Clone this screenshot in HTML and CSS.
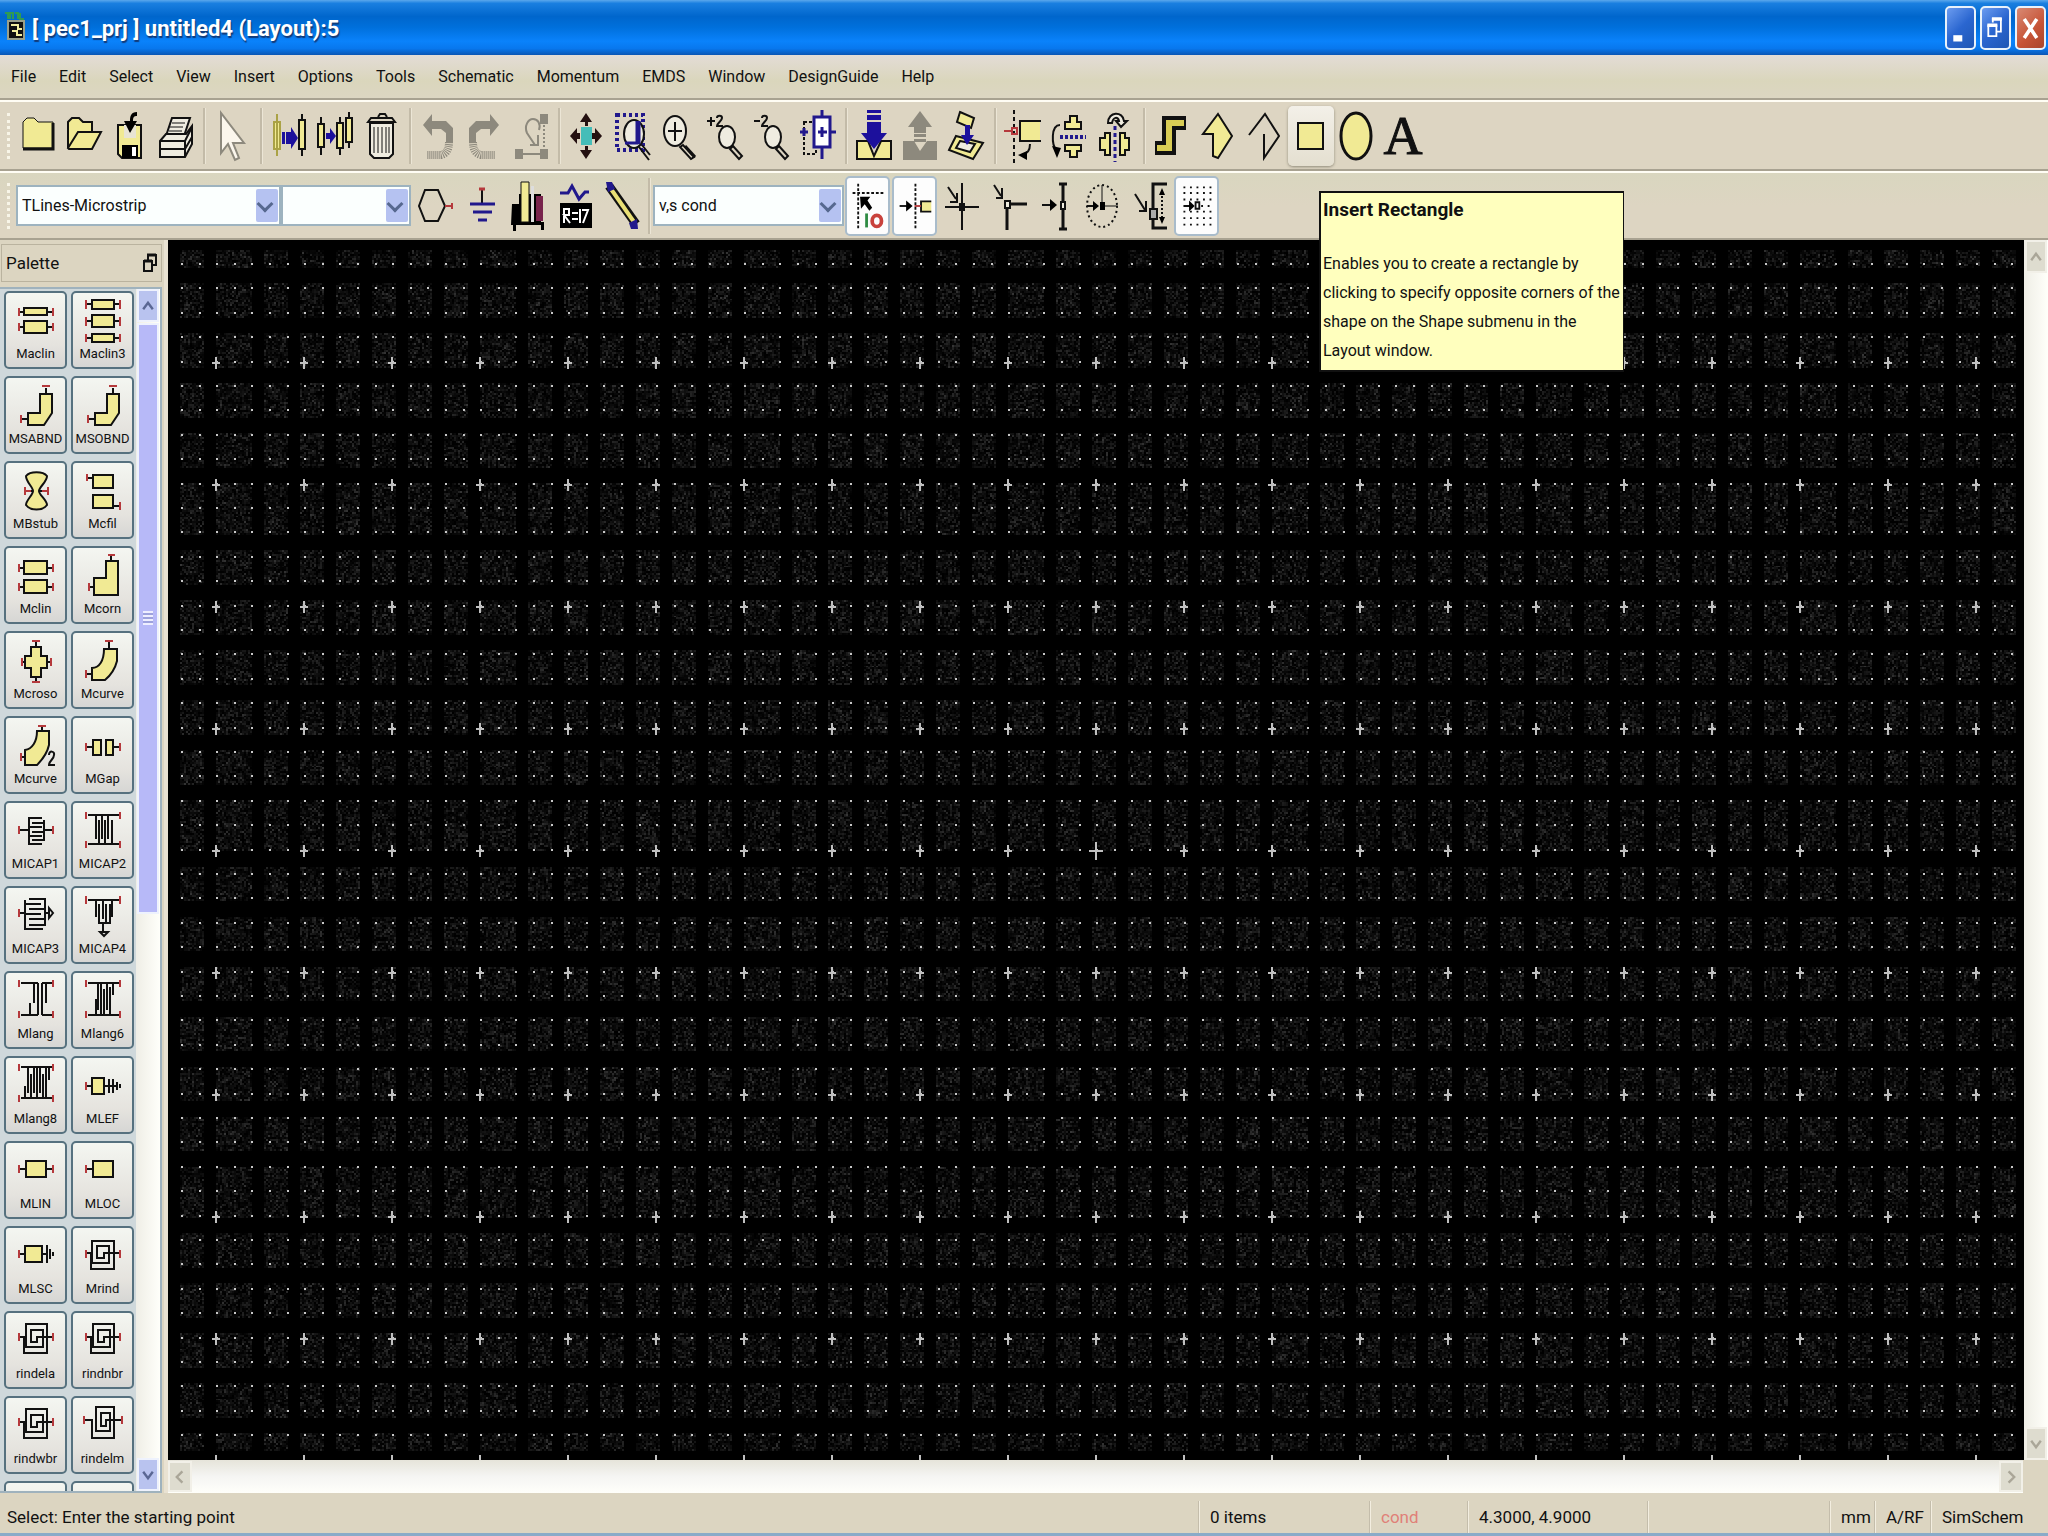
FILE: index.html
```html
<!DOCTYPE html>
<html lang="en">
<head>
  <meta charset="UTF-8">
  <title>[ pec1_prj ] untitled4 (Layout):5</title>
  <meta name="viewport" content="width=device-width, initial-scale=1.0">
  <link rel="stylesheet" href="styles.css">
</head>
<body>
  <header class="titlebar">
    <svg class="app-icon" viewBox="0 0 24 32"><path d="M1 1h3v6M6 7V1h3v6M11 1h3v6M16 1v6h4" fill="none" stroke="#2f9a54" stroke-width="2"/><rect x="4" y="9" width="16" height="18" fill="#111" stroke="#9aa08a" stroke-width="2"/><path d="M7 13h7v4h4M8 19h5v4h5" fill="none" stroke="#f4efa0" stroke-width="2"/></svg>
    <h1>[ pec1_prj ] untitled4 (Layout):5</h1>
    <div class="window-buttons">
      <button class="win-btn" aria-label="Minimize"><svg viewBox="0 0 30 42"><path d="M7 29h10v7H7z" fill="#fff"/></svg></button>
      <button class="win-btn" aria-label="Restore"><svg viewBox="0 0 30 42"><path d="M12 15v-4h9v14h-4M7 18h9v12H7z" fill="none" stroke="#fff" stroke-width="2"/><path d="M11 11h11M6 18h11" stroke="#fff" stroke-width="4"/></svg></button>
      <button class="win-btn close" aria-label="Close"><svg viewBox="0 0 30 42"><path d="M8 11l14 21M22 11L8 32" stroke="#fff" stroke-width="4"/></svg></button>
    </div>
  </header>

  <nav class="menubar">
    <button>File</button>
    <button>Edit</button>
    <button>Select</button>
    <button>View</button>
    <button>Insert</button>
    <button>Options</button>
    <button>Tools</button>
    <button>Schematic</button>
    <button>Momentum</button>
    <button>EMDS</button>
    <button>Window</button>
    <button>DesignGuide</button>
    <button>Help</button>
  </nav>

  <!-- main toolbar -->
  <div class="toolbar">
    <span class="grip"></span>
    <button class="tool" aria-label="New"><svg viewBox="0 0 44 56"><path class="y thin" d="M7 40V14l4-4h7l4 4h15v26z"/><path class="k bold" d="M7 41h30V15"/></svg></button>
    <button class="tool" aria-label="Open"><svg viewBox="0 0 44 56"><path class="y" d="M6 40V14l4-4h7l4 4h9v10M6 40l10-16h23l-9 17H7z"/></svg></button>
    <button class="tool" aria-label="Save"><svg viewBox="0 0 44 56"><path class="y" d="M10 17h23v33H14l-4-4z"/><path d="M16 17h12v13H16z" fill="#e8e4d4"/><path d="M14 37h16v13H14z"/><path d="M24 39h4v9h-4z" fill="#fff"/><path d="M29 4c-6 0-7 4-7 9h-6l6 12 7-12h-4c0-4 1-5 4-5z"/></svg></button>
    <button class="tool" aria-label="Print"><svg viewBox="0 0 44 56"><path class="w" d="M18 10h18l-6 18H12z"/><path class="k thin" d="M18 15h13M16 19h13M15 23h13"/><path class="w" d="M6 33l6-7h20l6-8v18l-7 13H6z"/><path class="k" d="M6 33h25l7-14M31 33v16M6 41h25l7-12"/></svg></button>
    <span class="sep"></span>
    <button class="tool" aria-label="End Command"><svg viewBox="0 0 44 56"><path d="M10 5v40l7-9 7 16 4-2-6-15h11z" fill="#fbf6ec" stroke="#8d897d" stroke-width="2"/></svg></button>
    <span class="sep"></span>
    <button class="tool" aria-label="Copy"><svg viewBox="0 0 44 56"><path d="M9 6v42M6 14h6v27H6z" fill="#f0ea90" stroke="#aaa245" stroke-width="2"/><path class="y" d="M34 6v6M34 41v7M31 12h6v29h-6z"/><path class="b" d="M14 24h3v12h-3zM18 24h5v-5l7 11-7 11v-5h-5z"/></svg></button>
    <button class="tool" aria-label="Step and Repeat"><svg viewBox="0 0 44 56"><path class="y" d="M7 9v7M7 39v8M4 16h6v23H4zM26 9v6M26 40v7M23 15h6v25h-6zM35 4v6M35 34v6M32 10h6v24h-6z"/><path class="b" d="M12 25h4v-5l6 8-6 8v-5h-4z"/></svg></button>
    <button class="tool" aria-label="Delete"><svg viewBox="0 0 44 56"><path class="w" d="M10 15h23v31l-4 4H14l-4-4z"/><path class="k" d="M8 14l3-4h21l3 4zM18 9l2-3h5l2 3"/><path class="k thin" d="M14 19v26M18 19v26M22 19v26M26 19v26M29 19v26"/></svg></button>
    <span class="sep"></span>
    <button class="tool" aria-label="Undo" disabled><svg viewBox="0 0 44 56"><path class="g" d="M6 17L15 6v7h14l7 7v14h-7v-9l-5-4h-9v7z"/><path d="M32 34c0 8-3 12-8 13H10" fill="none" stroke="#8d897d" stroke-width="8" stroke-dasharray="1 1"/></svg></button>
    <button class="tool" aria-label="Redo" disabled><svg viewBox="0 0 44 56"><path class="g" d="M36 17L27 6v7H13l-7 7v14h7v-9l5-4h9v7z"/><path d="M10 34c0 8 3 12 8 13h14" fill="none" stroke="#8d897d" stroke-width="8" stroke-dasharray="1 1"/></svg></button>
    <button class="tool" aria-label="Swap Components" disabled><svg viewBox="0 0 44 56"><path class="g" d="M31 6h8v10h-8zM6 41h8v10H6zM31 41h8v10h-8z"/><path d="M14 46h17M26 37l-8-12c-3-7 1-14 6-14s8 5 6 11M21 37h8V27" fill="none" stroke="#8d897d" stroke-width="2"/><path d="M35 17v24" stroke="#8d897d" stroke-width="2" stroke-dasharray="2 2"/></svg></button>
    <span class="sep"></span>
    <button class="tool" aria-label="Pan"><svg viewBox="0 0 44 56"><path d="M15 19h11v18H15z" fill="#45bdb8"/><path class="d" d="M20 5l6 9h-4v4h-3v-4h-5zM20 51l6-9h-4v-4h-3v4h-5zM4 28l7-8v5h3v6h-3v5zM36 28l-7-8v5h-3v6h3v5z"/></svg></button>
    <button class="tool" aria-label="Zoom Area"><svg viewBox="0 0 44 56"><path class="n" d="M5 7h26v35H5z" stroke-width="4" stroke-dasharray="3 3"/><ellipse class="w" cx="22" cy="26" rx="10" ry="14"/><path class="n" d="M13 35h12V13M27 13v23" stroke-width="3"/><path class="k" d="M27 39l10 13M30 37l8 10"/></svg></button>
    <button class="tool" aria-label="Zoom In"><svg viewBox="0 0 44 56"><ellipse class="w" cx="17" cy="23" rx="11" ry="15"/><path class="k" d="M17 14v19M10 23h14M22 39l3-2 11 12-3 2z"/><path class="k bold" d="M27 38l10 11"/></svg></button>
    <button class="tool" aria-label="Zoom In by 2"><svg viewBox="0 0 44 56"><path class="k" d="M3 13h8M7 9v9M13 10c0-3 5-3 5 0 0 3-5 5-5 8h6"/><ellipse class="w" cx="23" cy="29" rx="8" ry="11"/><path class="k" d="M26 41l3-3 9 10-3 3z"/></svg></button>
    <button class="tool" aria-label="Zoom Out by 2"><svg viewBox="0 0 44 56"><path class="k" d="M4 13h6M12 10c0-3 5-3 5 0 0 3-5 5-5 8h6"/><ellipse class="w" cx="23" cy="29" rx="8" ry="11"/><path class="k" d="M26 41l3-3 9 10-3 3z"/></svg></button>
    <button class="tool" aria-label="View All"><svg viewBox="0 0 44 56"><path class="k" d="M8 14h12v32H8z" stroke-dasharray="3 2"/><path d="M18 9h16v30H18z" fill="#fff" stroke="#21188c" stroke-width="3"/><path class="n" d="M26 2v6M26 40v11M34 24h6M4 24h8M8 20v8M22 24h9M26 19v10" stroke-width="3"/></svg></button>
    <span class="sep"></span>
    <button class="tool" aria-label="Push Into Hierarchy"><svg viewBox="0 0 44 56"><path class="y" d="M4 33h11l6 15 7-15h10v18H4z"/><path class="b" d="M14 2h14v3H14zM14 7h14v5H14zM14 14h14v11h6L21 41 8 25h6z"/></svg></button>
    <button class="tool" aria-label="Pop Out of Hierarchy" disabled><svg viewBox="0 0 44 56"><path class="g" d="M4 33h11l6 10 7-10h10v19H4zM21 3l12 16h-6v6H15v-6H9zM15 26h12v3H15zM15 31h12v3H15z"/></svg></button>
    <button class="tool" aria-label="Hierarchy Instance"><svg viewBox="0 0 44 56"><path class="y" d="M15 4l14 6-3 10-14-6zM11 28l27 7-10 16-24-9z"/><path class="w" d="M15 33l15 3-5 8-14-4z"/><path class="b" d="M20 17h5v10h4l-7 10-6-10h4z"/></svg></button>
    <span class="sep"></span>
    <button class="tool" aria-label="Rotate"><svg viewBox="0 0 44 56"><path class="k" d="M12 2v54" stroke-dasharray="4 3"/><path d="M38 13H18v20h20z" fill="#f1ea94"/><path class="k" d="M39 13H18v20h21M28 36c0 7-3 10-8 11"/><path class="r" d="M2 23h9M10 20h5v6h-5z"/><path d="M25 43v9l-9-5z"/></svg></button>
    <button class="tool" aria-label="Mirror About X"><svg viewBox="0 0 44 56"><path class="y" d="M17 21v-7h5V8h7v6h4v7zM17 37v6h5v6h7v-6h4v-6z"/><path class="n" d="M12 29h26" stroke-width="4" stroke-dasharray="3 2"/><path class="k" d="M12 17c-9 0-9 20-3 26"/><path d="M4 38l9 2-4 10z"/></svg></button>
    <button class="tool" aria-label="Mirror About Y"><svg viewBox="0 0 44 56"><path class="y" d="M16 25h-5v5H6v12h5v5h5zM26 25h5v5h4v12h-4v5h-5z"/><path class="n" d="M21 18v36" stroke-width="3" stroke-dasharray="4 3"/><path class="w" d="M14 15c0-12 15-12 16-2h3l-6 6-5-6h3c-1-5-6-4-7 2z"/></svg></button>
    <span class="sep"></span>
    <button class="tool" aria-label="Insert Path"><svg viewBox="0 0 44 56"><path d="M4 40h14V15h17" fill="none" stroke="#111" stroke-width="14"/><path d="M6 40h12V15h15" fill="none" stroke="#d9cd55" stroke-width="6"/></svg></button>
    <button class="tool" aria-label="Insert Polygon"><svg viewBox="0 0 44 56"><path class="y" d="M21 6l14 22-14 22-5-2V26H6z"/></svg></button>
    <button class="tool" aria-label="Insert Polyline"><svg viewBox="0 0 44 56"><path class="k" d="M6 27L22 6l14 22-15 22V26"/></svg></button>
    <button class="tool hover" aria-label="Insert Rectangle"><svg viewBox="0 0 44 56"><path class="y" d="M9 15h25v26H9z"/></svg></button>
    <button class="tool" aria-label="Insert Circle"><svg viewBox="0 0 44 56"><ellipse class="y bold" cx="21" cy="28" rx="15" ry="23"/></svg></button>
    <button class="tool text-tool" aria-label="Insert Text">A</button>
  </div>

  <!-- palette selection, layer and snap toolbar -->
  <div class="toolbar second">
    <span class="grip"></span>
    <label class="combo combo-palette"><select aria-label="Component palette"><option>TLines-Microstrip</option></select></label>
    <label class="combo combo-history"><select aria-label="Component history"><option></option></select></label>
    <button class="tool" aria-label="Port"><svg viewBox="0 0 44 60"><path class="k" d="M12 14h13l7 16-7 15H12L6 30z"/><path class="r" d="M32 30h7M39 27v6"/></svg></button>
    <button class="tool" aria-label="Ground"><svg viewBox="0 0 44 60"><path class="k" d="M22 14v14"/><path class="r bold" d="M19 13h6"/><path class="n" d="M10 28h25M13 36h19M18 44h9" stroke-width="3"/></svg></button>
    <button class="tool" aria-label="Library"><svg viewBox="0 0 44 60"><path d="M5 28h7V18h22v28h3v8h-3v-5H9v6H6v-6H4z"/><path class="y thin" d="M14 6h8v40h-8z"/><path d="M24 10h3v36h-3z" fill="#ddd"/><path d="M29 20h7v25h-7z" fill="#78234c"/></svg></button>
    <button class="tool" aria-label="Variables"><svg viewBox="0 0 44 60"><path class="n" d="M6 17h8l4-7 7 13 6-7h4" stroke-width="3"/><path d="M6 27h32v25H6z"/><path d="M10 47V33h5v6h-5l6 8M18 37h6M18 43h6M26 33v14M28 34h6l-5 13" fill="none" stroke="#fff" stroke-width="2"/></svg></button>
    <button class="tool" aria-label="Wire"><svg viewBox="0 0 44 60"><path d="M8 10l27 38" stroke="#111" stroke-width="9"/><path d="M10 13l23 33" stroke="#e9df75" stroke-width="4"/><path d="M5 6h6l3 7-7 3zM37 53h-7l-2-6 8-4z" fill="#21188c"/></svg></button>
    <span class="sep"></span>
    <label class="combo combo-layer"><select aria-label="Entry layer"><option>v,s cond</option></select></label>
    <button class="tool on" aria-label="Snap enabled"><svg viewBox="0 0 44 60"><path class="k" d="M12 6v50M6 16h34" stroke-dasharray="3 2"/><path d="M14 20h11l-3 4 5 8-3 3-5-7-4 5z"/><path d="M21 38v15" stroke="#2e8b43" stroke-width="3"/><ellipse cx="32" cy="46" rx="5" ry="6" fill="none" stroke="#c9423c" stroke-width="4"/></svg></button>
    <button class="tool on" aria-label="Pin snap"><svg viewBox="0 0 44 60"><path class="k" d="M23 6v50" stroke-dasharray="3 2"/><path class="k" d="M6 30h9"/><path class="y" d="M40 25H29v11h11"/><path d="M13 24l7 6-7 6z"/><path class="r" d="M22 30h7"/></svg></button>
    <button class="tool" aria-label="Intersect snap"><svg viewBox="0 0 44 60"><path class="k" d="M22 7v47M5 31h34M8 11l8 12M17 17v9h-7M20 28h4v6h-4z"/></svg></button>
    <button class="tool" aria-label="Vertex snap"><svg viewBox="0 0 44 60"><path class="k bold" d="M20 54V31M22 28h18"/><path class="k" d="M7 9l7 11M15 12v10H9"/><path class="w" d="M18 25h5v7h-5z"/></svg></button>
    <button class="tool" aria-label="Midpoint snap"><svg viewBox="0 0 44 60"><path class="k bold" d="M29 8v45M25 8h8M25 53h8"/><path class="k" d="M8 29h10"/><path d="M16 23l7 6-7 6z"/><path class="w" d="M27 26h4v7h-4z"/></svg></button>
    <button class="tool" aria-label="Arc center snap"><svg viewBox="0 0 44 60"><ellipse class="k" cx="21" cy="30" rx="15" ry="21" stroke-dasharray="2 3"/><path class="k thin" d="M21 9v21h16"/><path class="k" d="M6 30h8"/><path d="M12 25l6 5-6 5zM19 26h5v8h-5z"/></svg></button>
    <button class="tool" aria-label="Edge snap"><svg viewBox="0 0 44 60"><path class="k" d="M7 18l10 16M18 25v10h-7"/><path class="k" d="M34 16v32" stroke-dasharray="2 2"/><path class="k bold" d="M39 8H25v44h14"/><path d="M22 33h7v10h-7z" fill="#aaa" stroke="#111" stroke-width="2"/><path d="M31 19l3-7 3 7zM31 41l3 7 3-7z"/></svg></button>
    <button class="tool on" aria-label="Grid snap"><svg viewBox="0 0 44 60"><path d="M8 10h30M8 16h30M8 23h30M8 36h30M8 43h30M8 50h30M27 30h12" stroke="#111" stroke-width="2" stroke-dasharray="2 5"/><path class="k" d="M8 30h8M21 26h4v7h-4z"/><path d="M14 24l6 6-6 6z"/></svg></button>

    <div class="tooltip" role="tooltip">
      <strong>Insert Rectangle</strong>
      <p>Enables you to create a rectangle by<br>clicking to specify opposite corners of the<br>shape on the Shape submenu in the<br>Layout window.</p>
    </div>
  </div>

  <main class="workspace">
    <aside class="palette">
      <div class="palette-head">
        <h2>Palette</h2>
        <button class="float-btn" aria-label="Float palette"><svg viewBox="0 0 14 20"><path class="k" d="M5 7V2h8v10H9M1 8h8v10H1z"/><path class="k bold" d="M4 2h9M1 8h8"/></svg></button>
      </div>
      <div class="palette-body">
        <div class="tiles">
          <button class="tile"><svg viewBox="0 0 62 54"><path class="k" d="M15 21h32M15 36h32"/><path class="y" d="M19 17h23v7H19zM19 30h23v12H19z"/><path class="r" d="M14 17v8M48 17v8M14 32v8M48 32v8"/></svg>Maclin</button>
          <button class="tile"><svg viewBox="0 0 62 54"><path class="k" d="M15 13h32M15 30h32M15 47h32"/><path class="y" d="M20 9h22v9H20zM20 24h22v12H20zM20 43h22v8H20z"/><path class="r" d="M14 9v9M48 9v9M14 26v9M48 26v9M14 43v8M48 43v8"/></svg>Maclin3</button>
          <button class="tile"><svg viewBox="0 0 62 54"><path class="k" d="M41 12v6M17 43h6"/><path class="y" d="M35 18h12v19l-8 12H23V37h12z"/><path class="r" d="M37 10h8M16 39v8"/></svg>MSABND</button>
          <button class="tile"><svg viewBox="0 0 62 54"><path class="k" d="M41 12v6M17 43h6"/><path class="y" d="M35 18h12v19l-8 12H23V37h12z"/><path class="r" d="M37 10h8M16 39v8"/></svg>MSOBND</button>
          <button class="tile"><svg viewBox="0 0 62 54"><path class="k" d="M20 30h23"/><path class="y" d="M21 15c4-5 17-5 21 0 0 6-8 11-8 15s8 9 8 14c-4 6-17 6-21 0 0-5 7-10 7-14s-7-9-7-15z"/><path class="r" d="M20 26v8M43 26v8M20 30h6M37 30h6"/></svg>MBstub</button>
          <button class="tile"><svg viewBox="0 0 62 54"><path class="k" d="M16 17h6M42 45h6"/><path class="y" d="M21 14h20v13H21zM21 34h20v13H21z"/><path class="r" d="M15 13v7M48 41v8"/></svg>Mcfil</button>
          <button class="tile"><svg viewBox="0 0 62 54"><path class="k" d="M15 22h32M15 41h32"/><path class="y" d="M19 15h23v13H19zM19 34h23v13H19z"/><path class="r" d="M14 18v8M48 18v8M14 37v8M48 37v8"/></svg>Mclin</button>
          <button class="tile"><svg viewBox="0 0 62 54"><path class="k" d="M39 10v6M17 41h5"/><path class="y" d="M34 15h12v34H22V32h12z"/><path class="r" d="M36 9h7M17 37v8"/></svg>Mcorn</button>
          <button class="tile"><svg viewBox="0 0 62 54"><path class="k" d="M31 10v41M18 31h28"/><path class="y" d="M26 16h10v9h6v12h-6v9H26v-9h-6V25h6z"/><path class="r" d="M27 10h8M27 51h8M17 27v8M46 27v8"/></svg>Mcroso</button>
          <button class="tile"><svg viewBox="0 0 62 54"><path class="k" d="M37 11v7M15 43h6"/><path class="y" d="M32 18h13v12c-2 8-6 14-12 19H20V37c7 0 12-7 12-19z"/><path class="r" d="M33 10h8M14 39v8"/></svg>Mcurve</button>
          <button class="tile"><svg viewBox="0 0 62 54"><path class="k" d="M37 11v5M17 41h5"/><path class="y" d="M32 15h12v14c-2 9-6 14-12 20H20V34c7-1 12-8 12-19z"/><path class="r" d="M33 10h8M16 37v8"/><path class="k" d="M44 39c0-5 6-4 5 0 0 4-5 6-5 10h6"/></svg>Mcurve</button>
          <button class="tile"><svg viewBox="0 0 62 54"><path class="k" d="M15 31h6M41 31h6"/><path class="y" d="M21 24h8v15h-8zM34 24h7v15h-7z"/><path class="r" d="M14 27v8M48 27v8"/></svg>MGap</button>
          <button class="tile"><svg viewBox="0 0 62 54"><path class="k" d="M15 29h9M40 29h8M39 19v21M24 16v28M24 17h13M27 22h12M24 26h13M27 31h12M24 35h13M27 39h12M24 43h13"/><path class="r" d="M14 25v8M48 25v8"/></svg>MICAP1</button>
          <button class="tile"><svg viewBox="0 0 62 54"><path class="k" d="M16 14h32M16 43h32M24 14v24M27 19v24M30 14v24M33 19v24M36 14v24M40 19v24"/><path class="r" d="M14 11v7M48 11v7M14 40v7M48 40v7"/></svg>MICAP2</button>
          <button class="tile"><svg viewBox="0 0 62 54"><path class="k" d="M14 27h6M20 14v30M24 13h16v26H24M20 18h16M24 23h16M20 28h16M24 33h16M20 43h18M41 27h3M44 22l4 5-4 5z"/><path class="r" d="M14 23v8"/></svg>MICAP3</button>
          <button class="tile"><svg viewBox="0 0 62 54"><path class="k" d="M16 14h32M24 14v17M27 18v19h11V18M31 14v19M34 18v19M40 14v17M31 37v9M28 46h8l-4 4z"/><path class="r" d="M14 10v8M48 10v8"/></svg>MICAP4</button>
          <button class="tile"><svg viewBox="0 0 62 54"><path class="k" d="M16 12h17M37 12h11M16 44h17M37 44h11M25 44V32M29 12v20M33 12v32M37 44V12M41 12v20"/><path class="r" d="M14 9v7M48 9v7M14 40v7M48 40v7"/></svg>Mlang</button>
          <button class="tile"><svg viewBox="0 0 62 54"><path class="k" d="M16 12h32M16 44h32M24 44V28M26 12v27M29 12v32M32 18v26M35 12v27M38 16v28M41 12v12"/><path class="r" d="M14 9v7M48 9v7M14 40v7M48 40v7"/></svg>Mlang6</button>
          <button class="tile"><svg viewBox="0 0 62 54"><path class="k" d="M16 11h32M16 42h32M20 42V30M23 12v25M26 18v24M29 12v25M32 12v30M35 12v25M38 18v24M41 12v30M44 12v12"/><path class="r" d="M14 8v7M48 8v7M14 39v7M48 39v7"/></svg>Mlang8</button>
          <button class="tile"><svg viewBox="0 0 62 54"><path class="k" d="M15 30h31M37 23v14M41 23v14M45 26v8M48 28v4"/><path class="y" d="M20 22h12v16H20z"/><path class="r" d="M14 26v8"/></svg>MLEF</button>
          <button class="tile"><svg viewBox="0 0 62 54"><path class="k" d="M15 28h32"/><path class="y" d="M21 20h20v16H21z"/><path class="r" d="M14 24v8M48 24v8"/></svg>MLIN</button>
          <button class="tile"><svg viewBox="0 0 62 54"><path class="k" d="M15 28h6"/><path class="y" d="M21 20h20v16H21z"/><path class="r" d="M14 24v8"/></svg>MLOC</button>
          <button class="tile"><svg viewBox="0 0 62 54"><path class="k" d="M15 28h28M42 19v18M45 23v10M48 26v4"/><path class="y" d="M20 20h17v16H20z"/><path class="r" d="M14 24v8"/></svg>MLSC</button>
          <button class="tile"><svg viewBox="0 0 62 54"><path class="k" d="M15 27h4v16h23V15H20v22h17V20H25v12h7v-5h15"/><path class="r" d="M14 24v8M48 24v8"/></svg>Mrind</button>
          <button class="tile"><svg viewBox="0 0 62 54"><path class="k" d="M15 26h4v16h23V13H21v23h17V19H26v12h6v-5h15"/><path class="r" d="M14 22v8M48 22v8"/></svg>rindela</button>
          <button class="tile"><svg viewBox="0 0 62 54"><path class="k" d="M15 26h4v16h23V13H21v23h17V19H26v12h6v-5h15"/><path class="r" d="M14 22v8M48 22v8"/></svg>rindnbr</button>
          <button class="tile"><svg viewBox="0 0 62 54"><path class="k" d="M15 26h4v16h23V13H21v23h17V19H26v12h6v-5h15"/><path class="r" d="M14 22v8M48 22v8"/></svg>rindwbr</button>
          <button class="tile"><svg viewBox="0 0 62 54"><path class="k" d="M13 24h7v18h22V11H24v24h14V17H29v13h5v-6h15"/><path class="r" d="M12 20v8M50 20v8"/></svg>rindelm</button>
          <button class="tile" aria-label="Next item"></button>
          <button class="tile" aria-label="Next item"></button>
        </div>
        <div class="scroll-v blue">
          <button aria-label="Scroll up"><svg viewBox="0 0 20 20"><path d="M4 14l6-8 6 8"/></svg></button>
          <div class="track"><div class="thumb"><i></i></div></div>
          <button aria-label="Scroll down"><svg viewBox="0 0 20 20"><path d="M4 6l6 8 6-8"/></svg></button>
        </div>
      </div>
    </aside>

    <section class="view">
      <div class="view-row">
        <div class="sheet"><canvas id="grid"></canvas></div>
        <div class="scroll-v">
          <button aria-label="Scroll up"><svg viewBox="0 0 20 20"><path d="M4 14l6-8 6 8"/></svg></button>
          <div class="track"></div>
          <button aria-label="Scroll down"><svg viewBox="0 0 20 20"><path d="M4 6l6 8 6-8"/></svg></button>
        </div>
      </div>
      <div class="scroll-h">
        <button aria-label="Scroll left"><svg viewBox="0 0 20 20"><path d="M13 3L6 10l7 7"/></svg></button>
        <div class="track"></div>
        <button aria-label="Scroll right"><svg viewBox="0 0 20 20"><path d="M7 3l7 7-7 7"/></svg></button>
      </div>
    </section>
  </main>

  <footer class="statusbar">
    <span class="st-msg">Select: Enter the starting point</span>
    <span class="st-items">0 items</span>
    <span class="st-layer">cond</span>
    <span class="st-coord">4.3000, 4.9000</span>
    <span class="st-delta"></span>
    <span class="st-unit">mm</span>
    <span class="st-mode">A/RF</span>
    <span class="st-sim">SimSchem</span>
  </footer>
  <script src="grid.js"></script>
</body>
</html>
```

FILE: styles.css
```css
* { box-sizing: border-box; }
html, body { height: 100%; }
body { margin: 0; display: flex; flex-direction: column; overflow: hidden; background: #dcd5c1; color: #111; font: 17px/24px Roboto, "Liberation Sans", sans-serif; border-bottom: 3px solid #8aabc8; }
button { font: inherit; color: inherit; background: none; border: 0; padding: 0; margin: 0; }
h1, h2, p { margin: 0; }

/* svg pens */
svg { display: block; }
.k { fill: none; stroke: #111; stroke-width: 2; }
.y { fill: #f1ea94; stroke: #111; stroke-width: 2; }
.w { fill: #efece0; stroke: #111; stroke-width: 2; }
.r { fill: none; stroke: #b5393c; stroke-width: 2; }
.n { fill: none; stroke: #21188c; }
.b { fill: #1c109c; }
.g { fill: #8d897d; }
.d { fill: #241010; }
.thin { stroke-width: 1; }
.bold { stroke-width: 3; }

.titlebar { flex: none; display: flex; align-items: center; height: 55px; padding: 0 2px 0 4px; background: linear-gradient(#5ba8ec 0, #1a7fe0 6%, #0066cc 30%, #0070dc 50%, #0a82fb 75%, #0878ee 88%, #0a55b4 100%); }
.app-icon { width: 24px; height: 32px; }
.titlebar h1 { flex: 1; margin: 2px 0 0 4px; color: #fff; font-size: 22px; line-height: 32px; font-weight: bold; text-shadow: 1px 2px 1px #123a78; }
.window-buttons { display: flex; gap: 4px; }
.win-btn { width: 31px; height: 44px; border: 2px solid #e8f2fb; border-radius: 5px; background: linear-gradient(135deg, #6c9cf0, #2a66d0 50%, #1e56b4); }
.win-btn svg { width: 100%; height: 100%; }
.win-btn.close { background: linear-gradient(135deg, #d98a74, #c65336 60%, #a8452c); }

.menubar { flex: none; display: flex; align-items: center; gap: 23px; height: 45px; padding: 0 11px; background: linear-gradient(#e3dcd6, #dad6bc 60%, #dcd6c2); border-bottom: 2px solid #a8a291; font-size: 16px; }

.toolbar { flex: none; position: relative; display: flex; align-items: center; height: 71px; padding-left: 7px; border-top: 2px solid #fffdf4; border-bottom: 2px solid #a8a291; background: #ddd5c2; }
.toolbar.second { height: 69px; background: linear-gradient(#d9d6bf, #ddd5c2 50%); }
.grip { width: 8px; height: 46px; border-left: 3px dotted #f8f5e8; }
.second .grip { width: 9px; }
.sep { width: 3px; height: 56px; margin: 0 4px; border-left: 2px solid #c3bba8; border-right: 1px solid #ece6d6; }
.second .sep { margin: 0 2px; }
.tool { width: 46px; height: 60px; padding: 0 1px; border-radius: 5px; }
.second .tool { width: 45px; margin: 0 1px; }
.tool svg { width: 44px; height: 100%; }
.tool.hover { background: linear-gradient(#f3f0e8, #e4dfd0); box-shadow: 0 1px 3px #8f8a7a; }
.tool.on { background: #fdfdfd; border: 2px solid #a9bccb; padding: 0; }
.tool.on svg { width: 41px; }
.text-tool { font: 54px/56px "Liberation Serif", serif; -webkit-text-stroke: 1px #111; }

.combo { position: relative; height: 41px; }
.combo select { width: 100%; height: 100%; appearance: none; margin: 0; padding: 0 28px 0 4px; border: 2px solid #9db3bf; border-radius: 0; background: #fbfffe; color: #111; font: inherit; font-size: 16px; }
.combo::before { content: ""; position: absolute; right: 3px; top: 4px; width: 22px; height: 33px; background: #b5c2f1; border-radius: 2px; pointer-events: none; }
.combo::after { content: ""; position: absolute; right: 10px; top: 13px; width: 9px; height: 9px; border: solid #56688f; border-width: 0 3px 3px 0; transform: rotate(45deg); pointer-events: none; }
.combo-palette { width: 265px; }
.combo-history { width: 130px; }
.combo-layer { width: 191px; }

.tooltip { position: absolute; z-index: 2; left: 1319px; top: 18px; padding: 2px 3px 5px 2px; border: 2px solid #111; border-right-width: 1px; background: #ffffbe; font-size: 16px; line-height: 29px; white-space: nowrap; }
.tooltip strong { display: block; margin-bottom: 25px; font-size: 19px; }

.workspace { flex: 1; min-height: 0; display: flex; }
.palette { width: 168px; display: flex; flex-direction: column; border-right: 4px solid #e9e2d2; }
.palette-head { flex: none; display: flex; align-items: center; justify-content: space-between; height: 38px; margin: 4px 2px 0 1px; padding: 0 4px; border: 1px solid #bab39f; }
.palette-head h2 { font-size: 17px; font-weight: normal; }
.float-btn svg { width: 14px; height: 20px; }
.palette-body { flex: 1; min-height: 0; display: flex; margin-top: 5px; margin-right: 2px; border: 2px solid #9fb2bd; border-left: 0; background: #cfd8db; }
.tiles { flex: 1; overflow: hidden; display: grid; grid-template-columns: 63px 63px; grid-auto-rows: 78px; gap: 7px 4px; padding: 2px 4px; }
.tile { display: flex; flex-direction: column; align-items: center; border: 2px solid #56717f; border-radius: 5px; background: linear-gradient(#f4f6f1, #e5e3de 70%, #d6d6d4); font-size: 13px; line-height: 18px; }
.tile svg { flex: none; width: 62px; height: 54px; margin-top: -2px; }

.scroll-v { flex: none; width: 24px; display: flex; flex-direction: column; align-items: center; background: linear-gradient(90deg, #efeee6, #fffffa); }
.scroll-v button { flex: none; width: 22px; height: 33px; border: 2px solid #f2f0e8; background: #dedccf; }
.scroll-v svg, .scroll-h svg { width: 100%; height: 16px; fill: none; stroke: #aaa698; stroke-width: 3; }
.scroll-v .track { flex: 1; align-self: stretch; }
.blue button { background: #b9c3ef; border-color: #eef2fd; }
.blue svg { stroke: #5a6793; }
.blue .thumb { display: flex; align-items: center; justify-content: center; height: 52%; margin: 1px; border: 2px solid #eef2fd; background: #b7b9f8; }
.thumb i { width: 10px; height: 14px; background: repeating-linear-gradient(#eef 0 2px, #9da2dd 2px 4px); }

.view { flex: 1; min-width: 0; display: flex; flex-direction: column; }
.view-row { flex: 1; min-height: 0; display: flex; }
.sheet { flex: 1; min-width: 0; overflow: hidden; background: #000; }
.sheet canvas { display: block; }
.scroll-h { flex: none; display: flex; align-items: center; height: 33px; margin-right: 25px; background: linear-gradient(#e6e4da, #f5f5f3 50%, #fffffa); }
.scroll-h button { width: 24px; height: 31px; border: 2px solid #f2f0e8; background: #dedccf; }
.scroll-h .track { flex: 1; }

.statusbar { flex: none; display: flex; align-items: flex-end; height: 40px; padding-left: 7px; }
.statusbar span { height: 32px; line-height: 32px; padding-left: 10px; border-left: 1px solid #f3eee0; box-shadow: -1px 0 #c4bdab; }
.statusbar .st-msg { flex: 1; padding: 0; border: 0; box-shadow: none; }
.st-items { width: 171px; }
.st-layer { width: 98px; color: #e08078; }
.st-coord { width: 180px; }
.st-delta { width: 182px; }
.st-unit { width: 45px; }
.st-mode { width: 56px; }
.st-sim { width: 117px; }
```

FILE: grid.js
```js
// layout sheet: minor grid dots, major grid crosses, origin marker
const canvas = document.getElementById('grid');
const STEP_X = 17.6, STEP_Y = 24.4;
const CELL_X = 12, CELL_Y = 50 / 3;

function drawGrid() {
  const box = canvas.parentElement.getBoundingClientRect();
  const w = canvas.width = Math.round(box.width);
  const h = canvas.height = Math.round(box.height);
  const ctx = canvas.getContext('2d');
  const ox = Math.round(box.left), oy = Math.round(box.top);
  let seed = 7;
  const rnd = () => (seed = (seed * 16807) % 2147483647) / 2147483647;
  const cells = new Set();
  const dots = [];

  ctx.fillStyle = '#000';
  ctx.fillRect(0, 0, w, h);

  for (let x = 13; x < w - 6; x += STEP_X) {
    for (let y = 24; y < h - 12; y += STEP_Y) {
      dots.push([Math.round(x), Math.round(y)]);
      cells.add(Math.floor((x + ox) / CELL_X) + ',' + Math.floor((y + oy) / CELL_Y));
    }
  }

  // faint speckle around the dots
  cells.forEach(function (key) {
    const [cx, cy] = key.split(',').map(Number);
    const x0 = Math.round(cx * CELL_X - ox), y0 = Math.round(cy * CELL_Y - oy);
    for (let i = 0; i < 12; i += 2) {
      for (let j = 0; j < 17; j += 2) {
        const v = Math.floor(rnd() * rnd() * 56);
        ctx.fillStyle = 'rgb(' + v + ',' + v + ',' + v + ')';
        ctx.fillRect(x0 + i, y0 + j, 2, 2);
      }
    }
  });

  ctx.fillStyle = '#c8c8c8';
  dots.forEach(([x, y]) => ctx.fillRect(x, y - 1, 2, 2));

  ctx.fillStyle = '#c0c0c0';
  for (let i = 0; 47 + i * 88 < w; i++) {
    for (let j = 0; 122 + j * 122 < h + 5; j++) {
      const x = 48 + i * 88, y = 122 + j * 122;
      const a = i === 10 && j === 4 ? 7 : 4;
      ctx.fillRect(x - a, y, a * 2, 2);
      ctx.fillRect(x - 1, y - a - 1, 2, a * 2 + 4);
    }
  }
}

drawGrid();
window.addEventListener('resize', drawGrid);
```
